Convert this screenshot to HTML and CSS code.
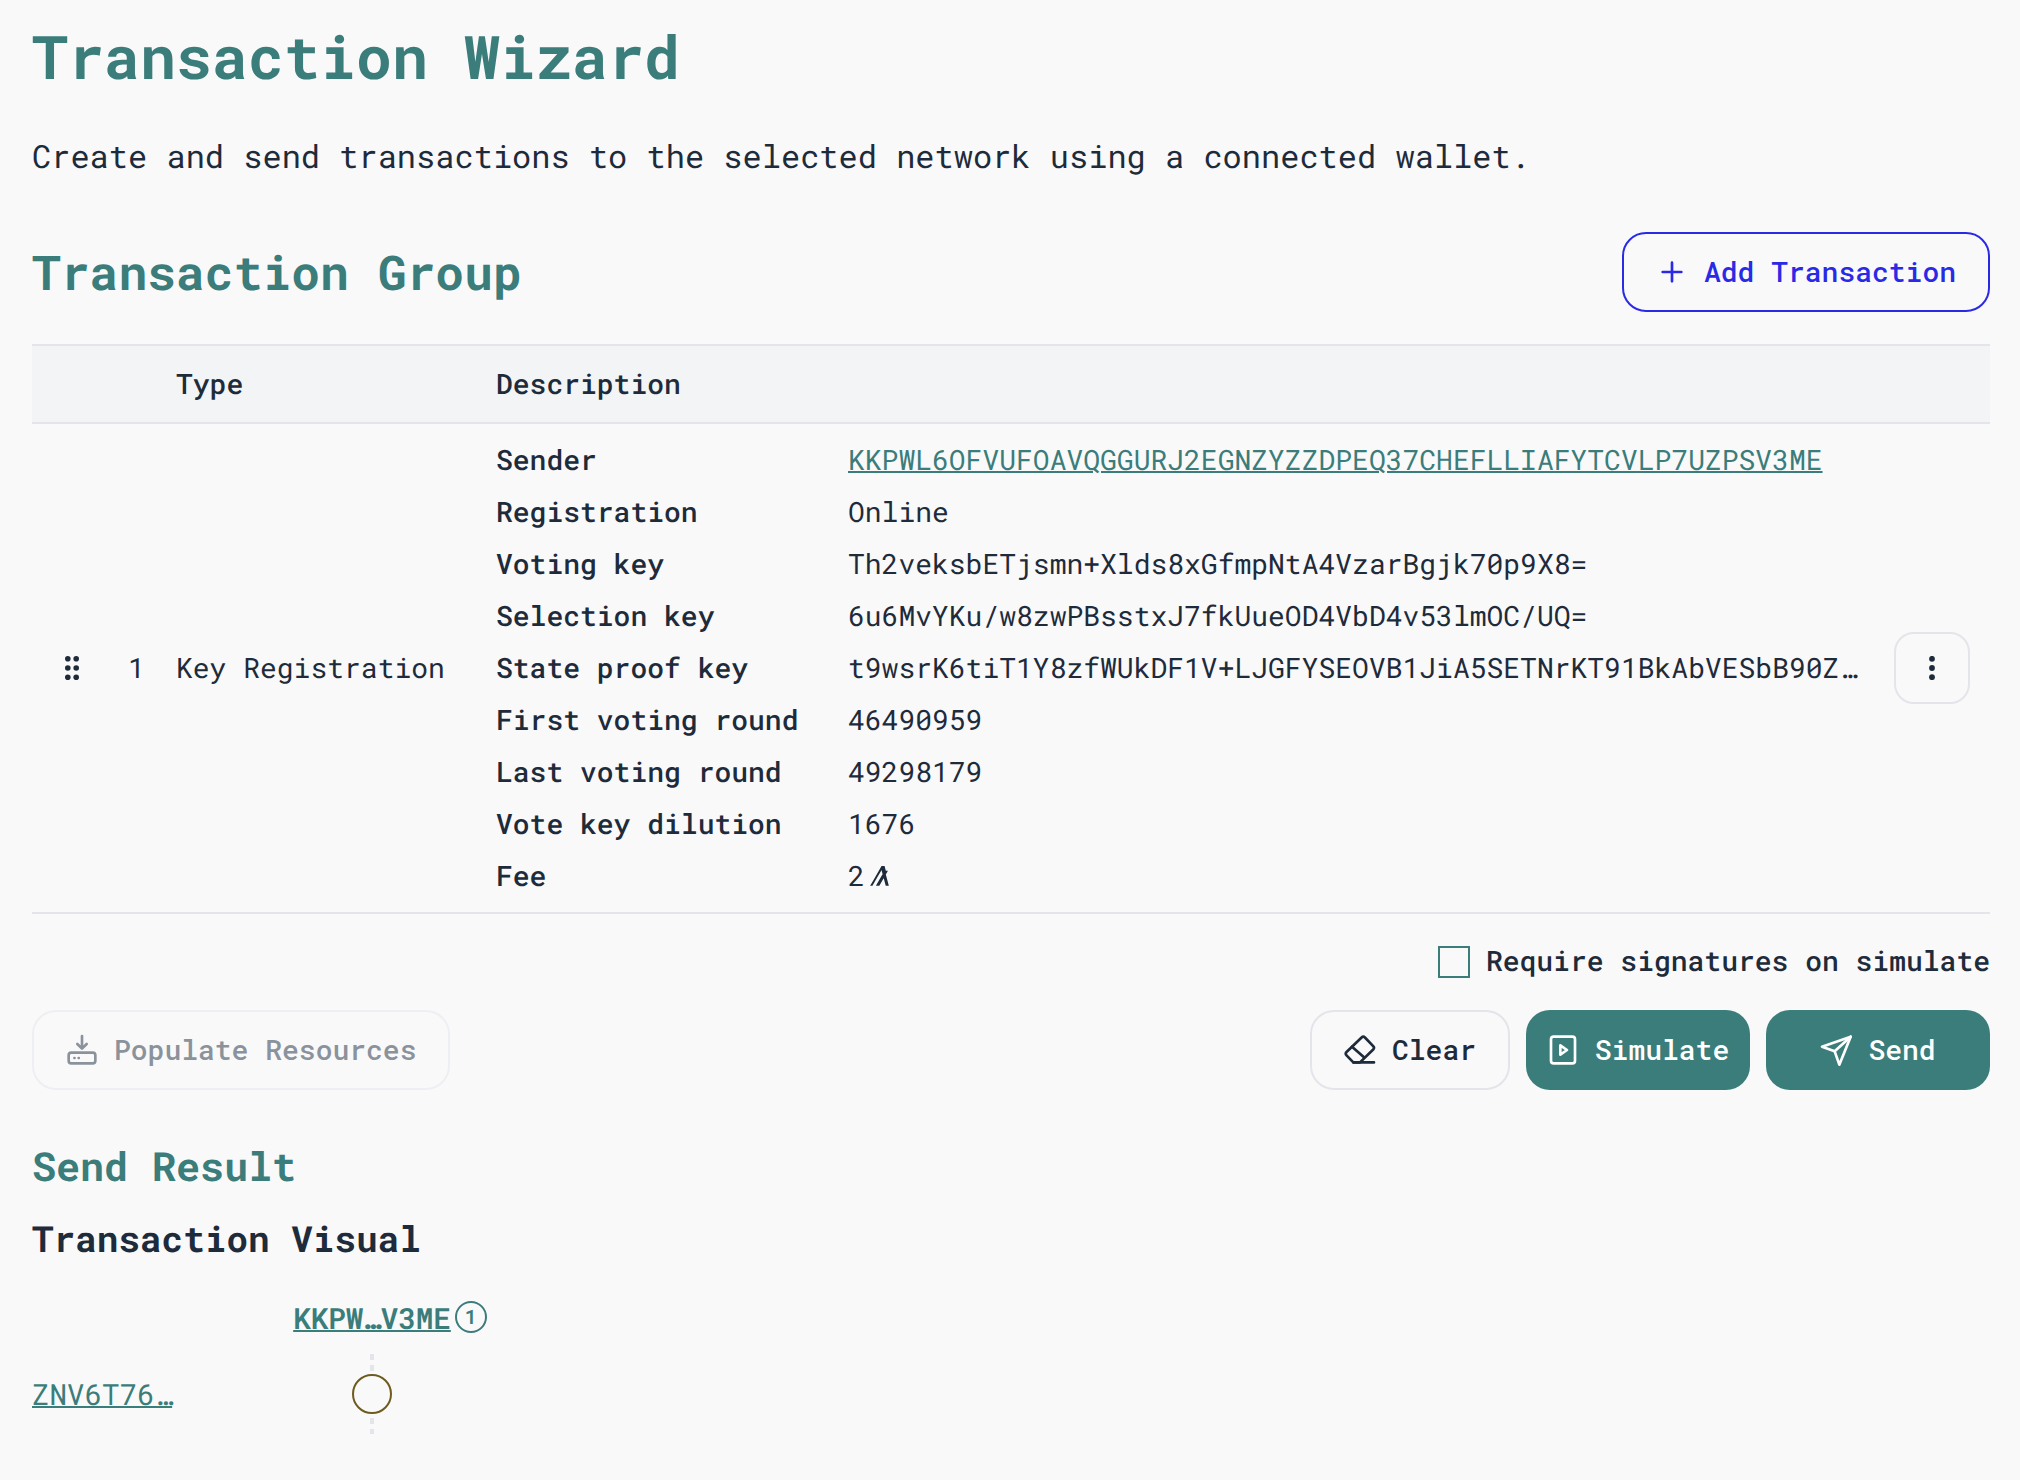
FILE: index.html
```html
<!DOCTYPE html>
<html lang="en">
<head>
<meta charset="utf-8">
<title>Transaction Wizard</title>
<link rel="stylesheet" href="styles.css">
</head>
<body>
<main class="page">
  <h1 class="title">Transaction Wizard</h1>
  <p class="lead">Create and send transactions to the selected network using a connected wallet.</p>
  <div class="group-head">
    <h2 class="group-title">Transaction Group</h2>
    <button class="btn btn-outline">
      <svg class="icon" viewBox="0 0 24 24" fill="none" stroke="currentColor" stroke-width="2" stroke-linecap="round"><path d="M5 12h14M12 5v14"/></svg>
      Add Transaction
    </button>
  </div>
  <table class="tx-table">
    <colgroup><col class="w-grip"><col class="w-num"><col class="w-type"><col><col class="w-act"></colgroup>
    <thead>
      <tr><th></th><th></th><th>Type</th><th colspan="2">Description</th></tr>
    </thead>
    <tbody>
      <tr>
        <td class="c-grip">
          <svg class="grip" viewBox="0 0 14 24" fill="currentColor"><circle cx="2.8" cy="2.8" r="2.8"/><circle cx="11.2" cy="2.8" r="2.8"/><circle cx="2.8" cy="12" r="2.8"/><circle cx="11.2" cy="12" r="2.8"/><circle cx="2.8" cy="21.2" r="2.8"/><circle cx="11.2" cy="21.2" r="2.8"/></svg>
        </td>
        <td class="c-num">1</td>
        <td class="c-type">Key Registration</td>
        <td class="c-desc">
          <dl class="details">
            <dt>Sender</dt><dd><a class="link" href="#">KKPWL6OFVUFOAVQGGURJ2EGNZYZZDPEQ37CHEFLLIAFYTCVLP7UZPSV3ME</a></dd>
            <dt>Registration</dt><dd>Online</dd>
            <dt>Voting key</dt><dd>Th2veksbETjsmn+Xlds8xGfmpNtA4VzarBgjk70p9X8=</dd>
            <dt>Selection key</dt><dd>6u6MvYKu/w8zwPBsstxJ7fkUueOD4VbD4v53lmOC/UQ=</dd>
            <dt>State proof key</dt><dd class="truncate">t9wsrK6tiT1Y8zfWUkDF1V+LJGFYSEOVB1JiA5SETNrKT91BkAbVESbB90ZxQpL2mN4w</dd>
            <dt>First voting round</dt><dd>46490959</dd>
            <dt>Last voting round</dt><dd>49298179</dd>
            <dt>Vote key dilution</dt><dd>1676</dd>
            <dt>Fee</dt><dd class="fee">2<svg class="algo" viewBox="0 0 114 114" fill="currentColor"><path d="M19.6 113l16.4-28.4 16.4-28.4L68.7 27.8l2.7-4.5 1.2 4.5 5 18.7-5.6 9.7-16.4 28.4-16.3 28.4h19.6l16.4-28.4 8.5-14.7 4 14.7 7.6 28.4h17.6l-7.6-28.4-7.6-28.4-2-7.3 12.2-21.2H96.2l-.6-2.1-6.2-23.2L88.8.1H71.7l-.4.6-16 27.7-16.3 28.3-16.4 28.3L6.3 113Z"/></svg></dd>
          </dl>
        </td>
        <td class="c-act">
          <button class="menu-btn" aria-label="More">
            <svg viewBox="0 0 8 24" fill="currentColor"><circle cx="4" cy="2.8" r="2.9"/><circle cx="4" cy="12" r="2.9"/><circle cx="4" cy="21.2" r="2.9"/></svg>
          </button>
        </td>
      </tr>
    </tbody>
  </table>
  <label class="sig-row"><span class="checkbox"></span>Require signatures on simulate</label>
  <div class="actions">
    <button class="btn btn-disabled">
      <svg class="icon" viewBox="0 0 24 24" fill="none" stroke="currentColor" stroke-width="2" stroke-linecap="round" stroke-linejoin="round"><path d="M12 1.5v9M8.5 7.5l3.5 3.5 3.5-3.5"/><rect x="2" y="14" width="20" height="8" rx="2"/><path d="M6.3 18h.1M9.5 18h.1"/></svg>
      Populate Resources
    </button>
    <div class="actions-right">
      <button class="btn btn-ghost">
        <svg class="icon" viewBox="0 0 24 24" fill="none" stroke="currentColor" stroke-width="2" stroke-linecap="round" stroke-linejoin="round"><path d="M13.2 2.6a1.8 1.8 0 0 1 2.5 0l6.2 6.5a1.8 1.8 0 0 1 0 2.5L12 21.3H7L1.9 16a1.8 1.8 0 0 1 0-2.5Z"/><path d="M6 9.5l9 8M7 21.3h15.5"/></svg>
        Clear
      </button>
      <button class="btn btn-primary btn-wide">
        <svg class="icon" viewBox="0 0 24 24" fill="none" stroke="currentColor" stroke-width="2" stroke-linecap="round" stroke-linejoin="round"><rect x="3" y="2" width="18" height="20" rx="2"/><path d="M10 8.5v7l5-3.5Z"/></svg>
        Simulate
      </button>
      <button class="btn btn-primary btn-wide">
        <svg class="icon" viewBox="0 0 24 24" fill="none" stroke="currentColor" stroke-width="2" stroke-linecap="round" stroke-linejoin="round"><path d="M23 2 1.5 9.5l9.5 3.5 3.5 10Z"/><path d="M23 2 11 13"/></svg>
        Send
      </button>
    </div>
  </div>
  <h2 class="result-title">Send Result</h2>
  <h3 class="visual-title">Transaction Visual</h3>
  <div class="visual">
    <div></div>
    <div class="visual-head"><a class="link link-strong" href="#">KKPW…V3ME<span class="badge">1</span></a></div>
    <div class="visual-label"><a class="link" href="#">ZNV6T76…</a></div>
    <div class="lane"><span class="node"></span></div>
  </div>
</main>
</body>
</html>
```
FILE: styles.css
```css
* { box-sizing: border-box; }
html, body { margin: 0; height: 100%; }
body {
  background: #f9f9fa;
  color: #1e2b3a;
  font-family: "Roboto Mono", "DejaVu Sans Mono", "Liberation Mono", monospace;
  font-size: 28px;
  text-rendering: geometricPrecision;
  overflow: hidden;
}
.page { padding: 0 30px 0 32px; }
.title { margin: 0; padding-top: 23px; font-size: 60px; line-height: 68px; font-weight: 700; color: #3b7d7b; }
.lead { margin: 41px 0 0; font-size: 32px; line-height: 48px; }
.group-head { display: flex; justify-content: space-between; align-items: center; margin-top: 52px; height: 80px; }
.group-title { margin: 0; padding-top: 2px; font-size: 48px; line-height: 56px; font-weight: 700; color: #3b7d7b; }
.btn {
  display: inline-flex; align-items: center; justify-content: center; gap: 16px;
  height: 80px; padding: 0 32px 2px; font: inherit; font-weight: 500; border-radius: 24px; border: 2px solid transparent; background: transparent; color: inherit;
}
.icon { width: 32px; height: 32px; flex: none; margin-top: 2px; }
.btn-outline { border-color: #2a2ae6; color: #2a2ae6; }
.btn-disabled { border-color: #eeeff2; color: #8a929c; }
.btn-ghost { border-color: #e4e5ea; }
.btn-primary { background: #3b7d7b; color: #fff; }
.btn-wide { width: 224px; padding: 0 0 2px; }
.tx-table { width: 100%; margin-top: 32px; border-collapse: collapse; table-layout: fixed; }
.w-grip { width: 80px; }
.w-num { width: 64px; }
.w-type { width: 320px; }
.w-act { width: 130px; }
.tx-table th { height: 78px; background: #f3f4f6; border-top: 2px solid #e4e5ea; border-bottom: 2px solid #e4e5ea; text-align: left; font-weight: 500; padding: 0 0 2px; }
.tx-table td { padding: 10px 0; border-bottom: 2px solid #e4e5ea; vertical-align: middle; }
.tx-table .c-grip { padding-left: 33px; }
.tx-table .c-num { padding-left: 16px; padding-bottom: 12px; }
.tx-table .c-type { white-space: nowrap; padding-bottom: 12px; }
.tx-table .c-act { padding-left: 34px; }
.grip { display: block; width: 14px; height: 24px; color: #1e2b3a; }
.details { display: grid; grid-template-columns: 352px minmax(0, 1fr); margin: 0; line-height: 52px; }
.details dt { font-weight: 500; }
.details dd { margin: 0; white-space: nowrap; }
.truncate { overflow: hidden; text-overflow: ellipsis; }
.fee { display: flex; align-items: center; gap: 4px; }
.algo { width: 20px; height: 20px; }
.link { color: #3b7d7b; text-decoration: underline; text-decoration-thickness: 2px; }
.link-strong { position: relative; font-weight: 600; }
.menu-btn { display: flex; align-items: center; justify-content: center; width: 76px; height: 72px; padding: 0; background: transparent; border: 2px solid #e4e5ea; border-radius: 20px; color: #1e2b3a; }
.menu-btn svg { width: 8px; height: 24px; }
.sig-row { display: flex; justify-content: flex-end; align-items: flex-start; gap: 16px; margin-top: 32px; height: 32px; line-height: 30px; font-weight: 500; }
.checkbox { width: 32px; height: 32px; border: 2px solid #3b7d7b; }
.actions { display: flex; justify-content: space-between; margin-top: 32px; }
.actions-right { display: flex; gap: 16px; }
.result-title { margin: 52px 0 0; font-size: 40px; line-height: 48px; font-weight: 700; color: #3b7d7b; }
.visual-title { margin: 24px 0 0; font-size: 36px; line-height: 48px; font-weight: 700; }
.visual { display: grid; grid-template-columns: 180px 320px; grid-template-rows: 72px 80px; margin-top: 20px; font-size: 29.2px; }
.visual-head { display: flex; justify-content: center; align-items: center; padding-bottom: 2px; }
.badge { position: absolute; left: calc(100% + 4px); top: 50%; transform: translateY(-50%); display: flex; align-items: center; justify-content: center; width: 32px; height: 32px; border: 2px solid #3b7d7b; border-radius: 50%; font-size: 20px; line-height: 1; }
.visual-label { display: flex; align-items: center; padding-bottom: 2px; }
.lane { display: flex; justify-content: center; align-items: center; background: repeating-linear-gradient(to bottom, #e4e5ea 0 6px, transparent 6px 10.67px) center / 4px 100% no-repeat; }
.node { width: 40px; height: 40px; border: 2px solid #6e5c1f; border-radius: 50%; background: #f9f9fa; }
```
